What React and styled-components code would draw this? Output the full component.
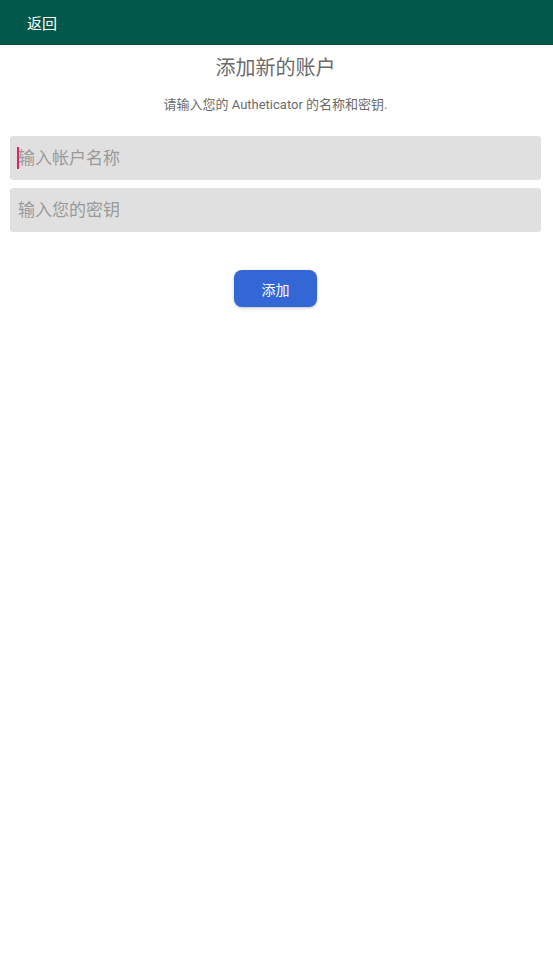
import styled, { createGlobalStyle } from "styled-components";

const GlobalStyle = createGlobalStyle`
  html, body {
    margin: 0;
    padding: 0;
    background: #ffffff;
    font-family: Roboto, "Noto Sans CJK SC", sans-serif;
  }
  * {
    box-sizing: border-box;
  }
`;

const Page = styled.div`
  width: 553px;
  min-height: 973px;
  background: #ffffff;
`;

const TopBar = styled.header`
  height: 45px;
  background-color: #02594b;
  border-bottom: 1px solid #014a3e;
  display: flex;
  align-items: center;
  padding-left: 27px;
`;

const BackButton = styled.button`
  background: none;
  border: none;
  padding: 0;
  color: #ffffff;
  font-family: Roboto, "Noto Sans CJK SC", sans-serif;
  font-size: 15px;
  cursor: pointer;
`;

const Content = styled.main`
  display: flex;
  flex-direction: column;
  align-items: center;
  padding: 0 12px 0 10px;
`;

const Title = styled.h1`
  margin: 10px 0 0;
  font-size: 20px;
  font-weight: 400;
  line-height: 26px;
  color: #6b6b6b;
`;

const Hint = styled.p`
  margin: 15px 0 0;
  font-size: 13px;
  line-height: 18px;
  color: #6b6b6b;
`;

const Fields = styled.div`
  width: 100%;
  display: flex;
  flex-direction: column;
  gap: 8px;
  margin-top: 22px;
`;

const FieldWrap = styled.div`
  position: relative;
`;

const Caret = styled.span`
  position: absolute;
  left: 7px;
  top: 11px;
  width: 2px;
  height: 22px;
  background: #e0245e;
`;

const Field = styled.input`
  display: block;
  width: 100%;
  height: 44px;
  border: none;
  border-radius: 3px;
  background: #e0e0e0;
  padding: 0 8px;
  font-family: Roboto, "Noto Sans CJK SC", sans-serif;
  font-size: 17px;
  color: #333;
  caret-color: #e0245e;
  outline: none;
  &::placeholder {
    color: #9a9a9a;
  }
`;

const AddButton = styled.button`
  margin-top: 38px;
  width: 83px;
  height: 37px;
  border: none;
  border-radius: 8px;
  background: #3367d6;
  color: #ffffff;
  font-family: Roboto, "Noto Sans CJK SC", sans-serif;
  font-size: 14px;
  box-shadow: 0 1px 3px rgba(0, 0, 0, 0.25);
  cursor: pointer;
`;

export default function App() {
  return (
    <Page>
      <GlobalStyle />
      <TopBar>
        <BackButton type="button">返回</BackButton>
      </TopBar>
      <Content>
        <Title>添加新的账户</Title>
        <Hint>请输入您的 Autheticator 的名称和密钥.</Hint>
        <Fields>
          <FieldWrap>
            <Field placeholder="输入帐户名称" />
            <Caret />
          </FieldWrap>
          <FieldWrap>
            <Field placeholder="输入您的密钥" />
          </FieldWrap>
        </Fields>
        <AddButton type="button">添加</AddButton>
      </Content>
    </Page>
  );
}
